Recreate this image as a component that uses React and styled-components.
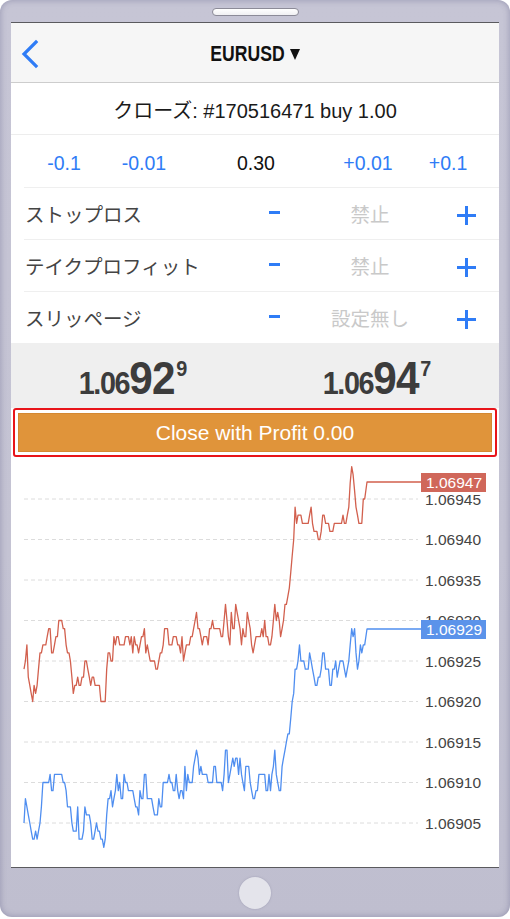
import React from "react";
import styled, { createGlobalStyle } from "styled-components";

const BLUE = "#2f7cf6";

const GlobalStyle = createGlobalStyle`
  html, body {
    margin: 0;
    padding: 0;
    background: #ffffff;
  }
  body {
    font-family: "Liberation Sans", "Noto Sans CJK JP", sans-serif;
  }
`;

// chart geometry, in page pixels (the svg viewBox uses page coordinates)
const GRID_TOP = 499;
const GRID_STEP = 40.5;
const PIP_TENTH = GRID_STEP / 5;

const askKeys = [
  [24, 660], [26, 651], [30, 680], [33, 696], [36, 680], [40, 660], [42, 633],
  [48, 637], [55, 632], [60, 628], [65, 640], [70, 660], [73, 685], [78, 680],
  [82, 685], [85, 672], [88, 665], [92, 685], [98, 682], [101, 690], [104, 703],
  [108, 661], [113, 660], [116, 640], [122, 635], [128, 645], [135, 640],
  [140, 660], [145, 645], [150, 650], [156, 670], [160, 645], [165, 638],
  [172, 640], [178, 650], [185, 640], [192, 638], [197, 613], [202, 635],
  [210, 637], [215, 628], [222, 640], [226, 597], [230, 630], [237, 613],
  [243, 640], [248, 618], [252, 635], [256, 637], [265, 637], [272, 637],
  [275, 610], [280, 637], [284, 620], [287, 590], [290, 580], [292, 548],
  [296, 520], [302, 515], [308, 512], [312, 507], [315, 530], [320, 540],
  [323, 515], [328, 525], [333, 535], [338, 520], [345, 522], [348, 515],
  [350, 495], [352, 475], [355, 495], [358, 510], [360, 515], [365, 508],
];

const makeRandom = (seed) => {
  let s = seed;
  return () => {
    s = (s * 16807) % 2147483647;
    return s / 2147483647;
  };
};

const interp = (keys, x) => {
  for (let i = 0; i < keys.length - 1; i++) {
    const [x0, y0] = keys[i];
    const [x1, y1] = keys[i + 1];
    if (x >= x0 && x <= x1) return y0 + ((y1 - y0) * (x - x0)) / (x1 - x0);
  }
  return keys[keys.length - 1][1];
};

const buildPath = (offset, seed, endY) => {
  const rand = makeRandom(seed);
  let d = 0;
  const pts = [];
  for (let x = 24; x <= 365; x += 1.45) {
    if (rand() < 0.55) {
      const u = rand();
      d = u < 0.3 ? -1 : u > 0.7 ? 1 : 0;
      if (u < 0.05) d = -2;
      if (u > 0.95) d = 2;
    }
    const base = interp(askKeys, x) + offset;
    const level = Math.round((base - GRID_TOP) / PIP_TENTH) + d;
    pts.push([x, GRID_TOP + level * PIP_TENTH]);
  }
  pts.push([367, endY], [421, endY]);
  return pts.map(([x, y], i) => `${i ? "L" : "M"}${x.toFixed(1)} ${y.toFixed(1)}`).join(" ");
};

const gridLabels = ["1.06945", "1.06940", "1.06935", "1.06930", "1.06925", "1.06920", "1.06915", "1.06910", "1.06905"];

const controls = [
  { label: "ストップロス", value: "禁止" },
  { label: "テイクプロフィット", value: "禁止" },
  { label: "スリッページ", value: "設定無し" },
];

const App = () => {
  const askPath = buildPath(0, 12345, 482);
  const bidPath = buildPath(146, 4242, 629);

  return (
    <>
      <GlobalStyle />
      <Phone>
        <TopBezel>
          <Speaker />
        </TopBezel>
        <Screen>
          <Header>
            <BackButton>
              <svg width="20" height="30" viewBox="0 0 20 30">
                <polyline points="15,3 3,15 15,27" fill="none" stroke={BLUE} strokeWidth="3.2" strokeLinecap="square" />
              </svg>
            </BackButton>
            <Title>
              <TitleText>EURUSD</TitleText>
              <Caret />
            </Title>
          </Header>
          <CloseRow>クローズ: #170516471 buy 1.00</CloseRow>
          <VolumeRow>
            <Step>-0.1</Step>
            <Step>-0.01</Step>
            <Step $plain>0.30</Step>
            <Step>+0.01</Step>
            <Step>+0.1</Step>
          </VolumeRow>
          {controls.map((c, i) => (
            <ControlRow key={c.label} $last={i === controls.length - 1}>
              <Label>{c.label}</Label>
              <Cell>
                <MinusSign />
              </Cell>
              <Value>{c.value}</Value>
              <Cell>
                <PlusSign />
              </Cell>
            </ControlRow>
          ))}
          <PriceRow>
            <Price>
              <Small>1.06</Small>
              <Big>92</Big>
              <Sup>9</Sup>
            </Price>
            <Price>
              <Small>1.06</Small>
              <Big>94</Big>
              <Sup>7</Sup>
            </Price>
          </PriceRow>
          <ButtonArea>
            <Highlight>
              <CloseButton>Close with Profit 0.00</CloseButton>
            </Highlight>
          </ButtonArea>
          <Chart>
            <svg width="487" height="409" viewBox="11 458 487 409">
              {gridLabels.map((label, i) => {
                const y = GRID_TOP + i * GRID_STEP;
                return (
                  <g key={label}>
                    <line x1="24" x2="418" y1={y} y2={y} stroke="#dcdcdc" strokeWidth="1" strokeDasharray="4 3" />
                    <text x="481" y={y + 5.5} textAnchor="end" fontSize="15.5" fill="#444" fontFamily="Liberation Sans, sans-serif">
                      {label}
                    </text>
                  </g>
                );
              })}
              <path d={askPath} fill="none" stroke="#d2604e" strokeWidth="1.3" strokeLinejoin="round" />
              <path d={bidPath} fill="none" stroke="#4f8ef0" strokeWidth="1.3" strokeLinejoin="round" />
              <rect x="421" y="473" width="65" height="19" fill="#d0675a" />
              <text x="482" y="488" textAnchor="end" fontSize="15.5" fill="#fff" fontFamily="Liberation Sans, sans-serif">
                1.06947
              </text>
              <rect x="421" y="620" width="65" height="19" fill="#5b93ea" />
              <text x="482" y="635" textAnchor="end" fontSize="15.5" fill="#fff" fontFamily="Liberation Sans, sans-serif">
                1.06929
              </text>
            </svg>
          </Chart>
        </Screen>
        <BottomBezel>
          <HomeButton />
        </BottomBezel>
      </Phone>
    </>
  );
};

export default App;

const Phone = styled.div`
  width: 510px;
  height: 917px;
  box-sizing: border-box;
  padding: 0 11px;
  display: flex;
  flex-direction: column;
  background: linear-gradient(#c6c5d5, #c4c3d3 60%, #bfbecf);
  border-radius: 12px;
  box-shadow: inset 0 0 6px rgba(90, 90, 130, 0.45);
`;

const TopBezel = styled.div`
  height: 22px;
  display: flex;
  justify-content: center;
  padding-top: 8px;
  box-sizing: border-box;
`;

const Speaker = styled.div`
  width: 87px;
  height: 8px;
  box-sizing: border-box;
  border-radius: 4px;
  border: 1px solid #8c8b98;
  background: linear-gradient(#ffffff, #f0f0f3);
`;

const Screen = styled.div`
  height: 846px;
  box-sizing: border-box;
  display: flex;
  flex-direction: column;
  background: #ffffff;
  border-top: 1px solid #5a5a5e;
  border-bottom: 1px solid #5a5a5e;
  overflow: hidden;
`;

const Header = styled.div`
  height: 60px;
  box-sizing: border-box;
  display: grid;
  grid-template-columns: 60px 1fr 60px;
  align-items: center;
  background: #f6f6f6;
  border-bottom: 1px solid #cdcdcd;
`;

const BackButton = styled.div`
  display: flex;
  align-items: center;
  padding-left: 10px;
  padding-top: 2px;
`;

const Title = styled.div`
  display: flex;
  align-items: center;
  justify-content: center;
  gap: 6px;
  color: #111;
  padding-top: 2px;
`;

const TitleText = styled.span`
  display: inline-block;
  font-family: "Liberation Sans", sans-serif;
  font-weight: 700;
  font-size: 22px;
  transform: scaleX(0.8);
  margin: 0 -9px;
`;

const Caret = styled.span`
  width: 0;
  height: 0;
  border-left: 5px solid transparent;
  border-right: 5px solid transparent;
  border-top: 11px solid #111;
  margin-top: 2px;
`;

const CloseRow = styled.div`
  height: 52px;
  box-sizing: border-box;
  display: flex;
  align-items: center;
  justify-content: center;
  font-size: 20px;
  color: #1a1a1a;
  border-bottom: 1px solid #ededed;
  padding-top: 1px;
`;

const VolumeRow = styled.div`
  height: 53px;
  box-sizing: border-box;
  margin-left: 13px;
  padding-top: 5px;
  display: grid;
  grid-template-columns: 80px 80px 144px 80px 80px 1fr;
  align-items: center;
  border-bottom: 1px solid #efefef;
`;

const Step = styled.div`
  text-align: center;
  font-size: 19.5px;
  color: ${(p) => (p.$plain ? "#111" : BLUE)};
`;

const ControlRow = styled.div`
  height: ${(p) => (p.$last ? "51px" : "52px")};
  box-sizing: border-box;
  margin-left: 13px;
  display: grid;
  grid-template-columns: 226px 49px 142px 50px 1fr;
  align-items: center;
  border-bottom: ${(p) => (p.$last ? "none" : "1px solid #efefef")};
`;

const Label = styled.div`
  padding-left: 1px;
  font-family: "Noto Sans CJK JP", sans-serif;
  font-size: 19.5px;
  color: #444;
  white-space: nowrap;
`;

const Cell = styled.div`
  display: flex;
  justify-content: center;
  align-items: center;
`;

const Value = styled.div`
  text-align: center;
  font-family: "Noto Sans CJK JP", sans-serif;
  font-size: 19.5px;
  color: #c9c9c9;
`;

const MinusSign = styled.span`
  width: 11px;
  height: 3px;
  background: ${BLUE};
  margin-bottom: 2px;
`;

const PlusSign = styled.span`
  position: relative;
  width: 19px;
  height: 19px;
  margin-top: 4px;

  &::before,
  &::after {
    content: "";
    position: absolute;
    background: ${BLUE};
  }
  &::before {
    left: 0;
    top: 8px;
    width: 19px;
    height: 3px;
  }
  &::after {
    left: 8px;
    top: 0;
    width: 3px;
    height: 19px;
  }
`;

const PriceRow = styled.div`
  height: 65px;
  display: grid;
  grid-template-columns: 1fr 1fr;
  align-items: center;
  background: #efefef;
`;

const Price = styled.div`
  text-align: center;
  color: #3c3c3c;
  font-family: "Liberation Sans", sans-serif;
  font-weight: 700;
  line-height: 1;
  white-space: nowrap;
  padding-top: 3px;
  transform: scaleX(0.9);
`;

const Small = styled.span`
  font-size: 32px;
  letter-spacing: -1.5px;
`;

const Big = styled.span`
  font-size: 47px;
  letter-spacing: -1px;
`;

const Sup = styled.span`
  font-size: 22px;
  vertical-align: 18px;
  margin-left: 2px;
`;

const ButtonArea = styled.div`
  height: 50px;
  box-sizing: border-box;
  padding: 0 2px 1px;
  background: #ffffff;
`;

const Highlight = styled.div`
  height: 49px;
  box-sizing: border-box;
  border: 2px solid #e8141a;
  border-radius: 3px;
  padding: 3px;
  background: #ffffff;
`;

const CloseButton = styled.div`
  height: 39px;
  box-sizing: border-box;
  display: flex;
  align-items: center;
  justify-content: center;
  background: #e0943a;
  border: 1px solid #d48832;
  color: #ffffff;
  font-size: 21px;
`;

const Chart = styled.div`
  flex: 1;
  background: #ffffff;

  svg {
    display: block;
  }
`;

const BottomBezel = styled.div`
  flex: 1;
  display: flex;
  justify-content: center;
  padding-top: 9px;
  box-sizing: border-box;
`;

const HomeButton = styled.div`
  width: 32px;
  height: 32px;
  border-radius: 50%;
  background: #e4e4eb;
  box-shadow: 0 0 2px rgba(120, 120, 150, 0.5);
`;
